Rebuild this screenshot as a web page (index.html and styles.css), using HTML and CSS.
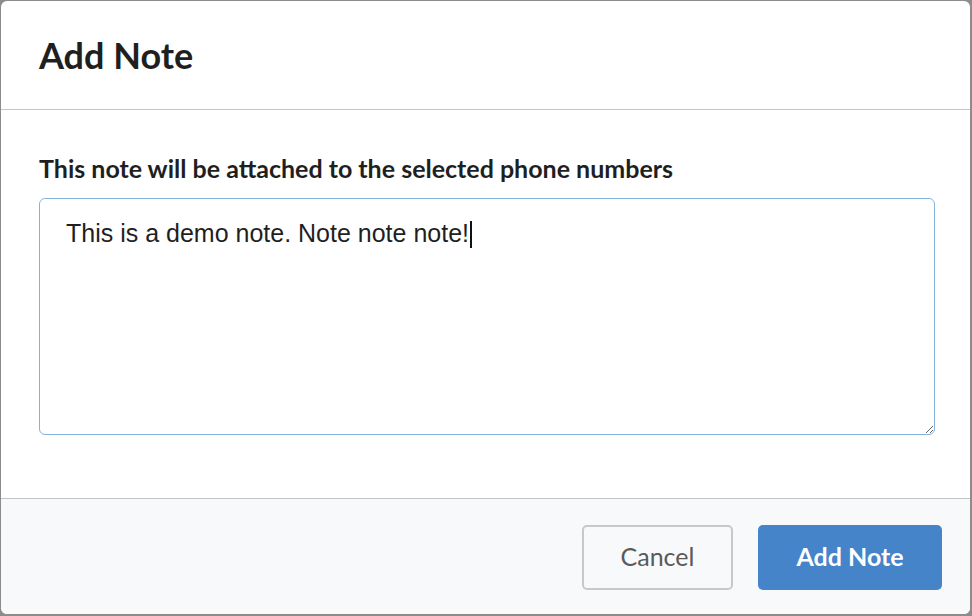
FILE: index.html
```html
<!DOCTYPE html>
<html lang="en">
<head>
    <meta charset="UTF-8">
    <title>Add Note</title>
<link rel="stylesheet" href="styles.css">
</head>
<body>
    <div class="modal">
        <div class="modal-header">
            <h1>Add Note</h1>
        </div>

        <div class="modal-body">
            <label for="note">This note will be attached to the selected phone numbers</label>
            <div class="note-field">
                <textarea id="note">This is a demo note. Note note note!</textarea>
                <span class="caret"></span>
            </div>
        </div>

        <div class="modal-footer">
            <button type="button" class="btn-cancel">Cancel</button>
            <button type="button" class="btn-primary">Add Note</button>
        </div>
    </div>
</body>
</html>
```

FILE: styles.css
```css
body {
    margin: 0;
    background-color: #8c8c8c;
    font-family: Lato, "Open Sans", sans-serif;
    height: 616px;
    overflow: hidden;
}

.modal {
    margin: 1px 2px 0 1px;
    height: 613px;
    background-color: #fff;
    border-radius: 6px;
    display: flex;
    flex-direction: column;
    overflow: hidden;
}

.modal-header {
    height: 108px;
    padding: 0 38px;
    display: flex;
    align-items: center;
    border-bottom: 1px solid #c4c4c4;
}

h1 {
    margin: 0;
    font-size: 36px;
    font-weight: bold;
    color: #1f1f1f;
}

.modal-body {
    flex: 1;
    padding: 43px 35px 0 38px;
}

label {
    display: block;
    font-size: 25px;
    line-height: 30px;
    font-weight: bold;
    color: #1f1f1f;
    margin-bottom: 15px;
}

/* textarea + caret ya kuandika */
.note-field {
    position: relative;
}

textarea {
    display: block;
    box-sizing: border-box;
    width: 100%;
    height: 237px;
    padding: 20px 26px;
    border: 1px solid #84b4de;
    border-radius: 6px;
    font-family: "Liberation Sans", Arial, sans-serif;
    font-size: 25px;
    color: #1f1f1f;
    outline: none;
}

.caret {
    position: absolute;
    left: 431px;
    top: 23px;
    width: 2px;
    height: 27px;
    background-color: #111;
}

.modal-footer {
    height: 116px;
    box-sizing: border-box;
    border-top: 1px solid #c4c4c4;
    background-color: #f8f9fa;
    display: flex;
    justify-content: flex-end;
    align-items: flex-start;
    gap: 25px;
    padding: 26px 28px 0 0;
}

button {
    height: 65px;
    padding: 0 0 3px;
    border-radius: 5px;
    font-family: Lato, sans-serif;
    font-size: 25px;
    cursor: pointer;
}

.btn-cancel {
    width: 151px;
    background-color: #f8f9fa;
    border: 2px solid #c8c8c8;
    color: #5a5a5a;
}

.btn-primary {
    width: 184px;
    background-color: #4584c9;
    border: none;
    color: #fff;
    font-weight: bold;
}
```
